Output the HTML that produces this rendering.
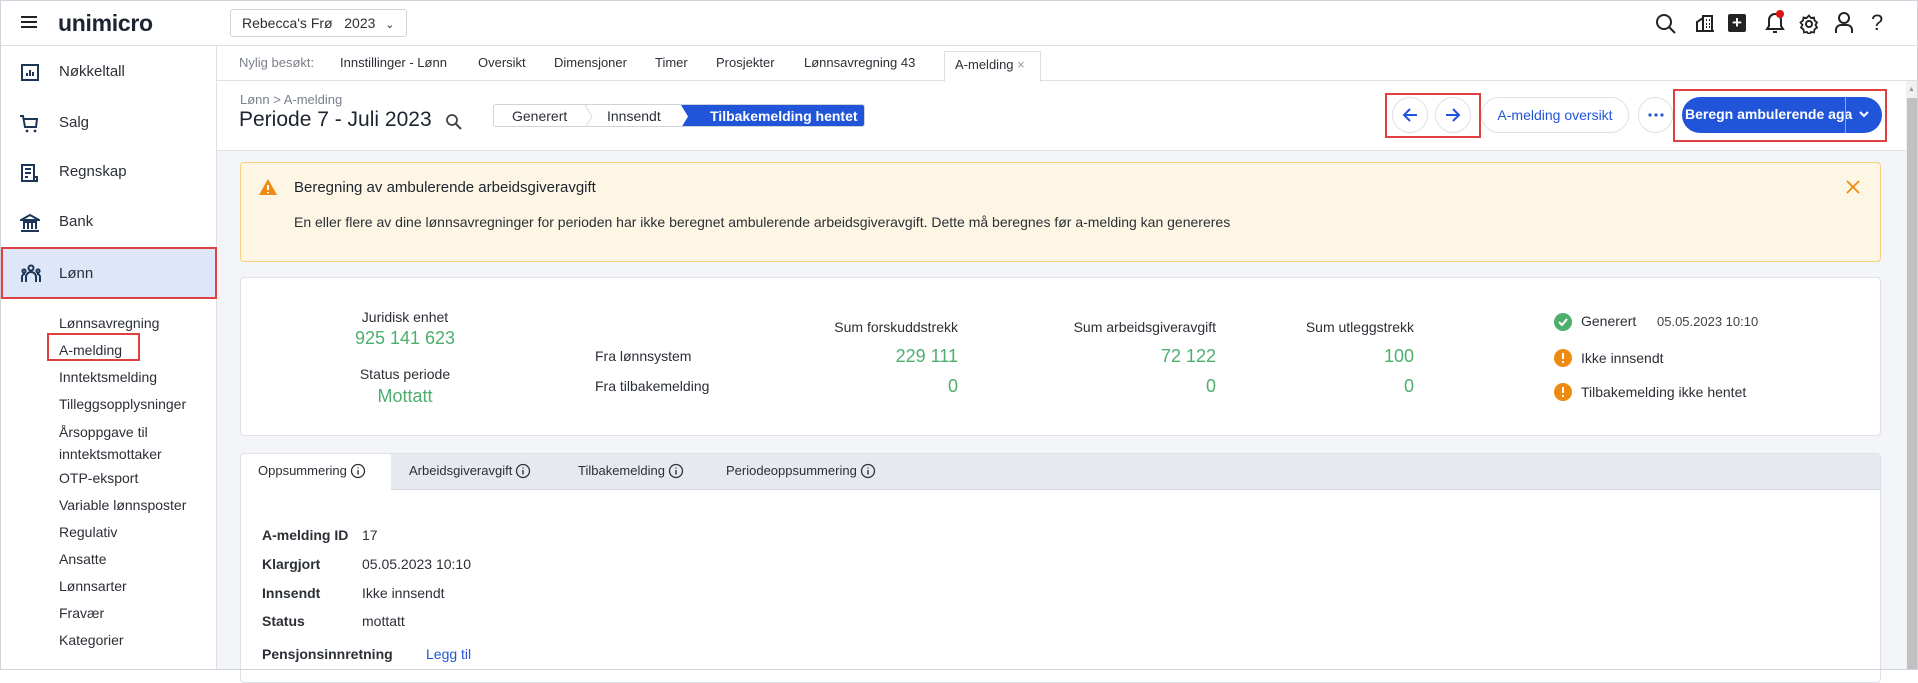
<!DOCTYPE html>
<html><head><meta charset="utf-8">
<style>
*{box-sizing:border-box;margin:0;padding:0}
body{width:1918px;height:670px;overflow:hidden;position:relative;background:#fff;font-family:"Liberation Sans",sans-serif;color:#2b2f36;font-size:14px}
.a{position:absolute;white-space:nowrap}
.red{position:absolute;border:2.5px solid #e0403f}
.g{color:#4caf6e}
.ico{stroke:#1d3557;fill:none;stroke-width:2}
.inf{display:inline-block;vertical-align:middle;margin-left:3px;margin-top:-2px}
</style></head><body>
<div class="a" style="left:0;top:0;width:1918px;height:670px;border:1px solid #cfd4da;z-index:50;pointer-events:none"></div>
<!-- header -->
<div class="a" style="left:0;top:0;width:1918px;height:46px;border-bottom:1px solid #dde1e6;background:#fff"></div>
<svg class="a" style="left:21px;top:15px" width="16" height="14"><path d="M0 2h16M0 7h16M0 12h16" stroke="#222" stroke-width="2"/></svg>
<div class="a" style="left:58px;top:10px;font-size:23px;font-weight:bold;color:#1b2430;letter-spacing:-0.3px">unimicro</div>
<div class="a" style="left:230px;top:9px;width:177px;height:28px;border:1px solid #cfd4da;border-radius:3px;padding:5px 11px;font-size:14px">Rebecca's Frø &nbsp; 2023 <span style="font-size:11px;margin-left:6px">&#8964;</span></div>
<svg class="a" style="left:1655px;top:13px" width="22" height="22"><circle cx="9" cy="9" r="7" stroke="#222" stroke-width="2" fill="none"/><path d="M14 14l6 6" stroke="#222" stroke-width="2"/></svg>
<svg class="a" style="left:1695px;top:13px" width="20" height="20"><path d="M2 18V9l6-4v13M8 18V3h9v15M1 18h18M11 7h1M14 7h1M11 11h1M14 11h1M11 14h1M14 14h1" stroke="#222" stroke-width="2" fill="none"/></svg>
<div class="a" style="left:1728px;top:14px;width:18px;height:18px;background:#222;border-radius:2px;color:#fff;font-weight:bold;font-size:17px;line-height:18px;text-align:center">+</div>
<svg class="a" style="left:1763px;top:10px" width="24" height="26"><path d="M4 19h16l-2-3v-6a6 6 0 0 0-12 0v6zM10 22h4" stroke="#222" stroke-width="2" fill="none"/><circle cx="17" cy="4" r="4" fill="#e01010"/></svg>
<svg class="a" style="left:1799px;top:14px" width="20" height="20"><circle cx="10" cy="10" r="3" stroke="#222" stroke-width="2" fill="none"/><path d="M10 1.5l2 2.5 3-.5 .5 3 2.5 2-1.5 2.5 1.5 2.5-2.5 2-.5 3-3-.5-2 2.5-2-2.5-3 .5-.5-3-2.5-2 1.5-2.5L1.5 8.5l2.5-2 .5-3 3 .5z" stroke="#222" stroke-width="1.8" fill="none"/></svg>
<svg class="a" style="left:1835px;top:12px" width="18" height="22"><circle cx="9" cy="6" r="5" stroke="#222" stroke-width="2" fill="none"/><path d="M1 21v-3a5 5 0 0 1 5-5h6a5 5 0 0 1 5 5v3" stroke="#222" stroke-width="2" fill="none"/></svg>
<div class="a" style="left:1871px;top:10px;font-size:22px;color:#222">?</div>

<!-- sidebar -->
<div class="a" style="left:0;top:46px;width:217px;height:624px;border-right:1px solid #dde1e6;background:#fff"></div>
<svg class="a" style="left:21px;top:64px" width="18" height="17"><rect x="1" y="1" width="16" height="15" class="ico"/><path d="M6 12V9M9 12V6M12 12V8" class="ico"/></svg>
<div class="a" style="left:59px;top:63px;font-size:15px">Nøkkeltall</div>
<svg class="a" style="left:19px;top:114px" width="22" height="20"><path d="M1 2h3l2 11h11l1-8H5" class="ico"/><circle cx="8" cy="17" r="1.4" fill="#1d3557"/><circle cx="16" cy="17" r="1.4" fill="#1d3557"/></svg>
<div class="a" style="left:59px;top:114px;font-size:15px">Salg</div>
<svg class="a" style="left:20px;top:163px" width="20" height="20"><path d="M2 2h12v16H2zM14 14h3v4h-3M5 6h6M5 10h6M5 14h3" class="ico"/></svg>
<div class="a" style="left:59px;top:163px;font-size:15px">Regnskap</div>
<svg class="a" style="left:20px;top:213px" width="20" height="20"><path d="M1 7L10 2l9 5zM3 9h14M4 10v6M8 10v6M12 10v6M16 10v6M1 18h18" class="ico"/></svg>
<div class="a" style="left:59px;top:213px;font-size:15px">Bank</div>
<div class="a" style="left:2px;top:248px;width:214px;height:49px;background:#dde7f9"></div>
<div class="red" style="left:1px;top:247px;width:216px;height:52px"></div>
<svg class="a" style="left:20px;top:264px" width="22" height="20"><circle cx="11" cy="4" r="2.5" class="ico" stroke-width="1.8"/><path d="M6 18v-5a5 5 0 0 1 10 0v5M2 18v-5a3 3 0 0 1 3-3M20 18v-5a3 3 0 0 0-3-3" class="ico" stroke-width="1.8"/><circle cx="4" cy="7" r="1.6" class="ico" stroke-width="1.5"/><circle cx="18" cy="7" r="1.6" class="ico" stroke-width="1.5"/></svg>
<div class="a" style="left:59px;top:265px;font-size:15px">Lønn</div>
<div style="position:absolute;left:59px;top:310px;font-size:14px;line-height:27px;color:#2b2f36">
<div>Lønnsavregning</div><div>A-melding</div><div>Inntektsmelding</div><div>Tilleggsopplysninger</div><div style="line-height:22px;padding-top:3px">Årsoppgave til<br>inntektsmottaker</div><div>OTP-eksport</div><div>Variable lønnsposter</div><div>Regulativ</div><div>Ansatte</div><div>Lønnsarter</div><div>Fravær</div><div>Kategorier</div></div>
<div class="red" style="left:47px;top:333px;width:93px;height:28px"></div>

<!-- recent bar -->
<div class="a" style="left:217px;top:46px;width:1701px;height:35px;border-bottom:1px solid #dde1e6"></div>
<div class="a" style="left:239px;top:55px;font-size:13px;color:#7a808a">Nylig besøkt:</div>
<div class="a" style="left:340px;top:55px;font-size:13px">Innstillinger - Lønn</div>
<div class="a" style="left:478px;top:55px;font-size:13px">Oversikt</div>
<div class="a" style="left:554px;top:55px;font-size:13px">Dimensjoner</div>
<div class="a" style="left:655px;top:55px;font-size:13px">Timer</div>
<div class="a" style="left:716px;top:55px;font-size:13px">Prosjekter</div>
<div class="a" style="left:804px;top:55px;font-size:13px">Lønnsavregning 43</div>
<div class="a" style="left:944px;top:51px;width:97px;height:31px;border:1px solid #dde1e6;border-bottom:none;background:#fff;font-size:13px;padding:5px 10px">A-melding <span style="color:#999">×</span></div>

<!-- title -->
<div class="a" style="left:240px;top:92px;font-size:13px;color:#7a808a">Lønn &gt; A-melding</div>
<div class="a" style="left:239px;top:108px;font-size:21px;color:#1b2430">Periode 7 - Juli 2023</div>
<svg class="a" style="left:445px;top:113px" width="17" height="17"><circle cx="7" cy="7" r="5" stroke="#444" stroke-width="1.8" fill="none"/><path d="M11 11l5 5" stroke="#444" stroke-width="2"/></svg>
<div class="a" style="left:493px;top:104px;width:372px;height:23px;border:1px solid #cfd4da;border-radius:3px;overflow:hidden">
<div class="a" style="left:18px;top:3px;font-size:14px">Generert</div>
<svg class="a" style="left:90px;top:0" width="10" height="23"><path d="M1 0l7 11.5L1 23" stroke="#d5d9de" fill="none"/></svg>
<div class="a" style="left:113px;top:3px;font-size:14px">Innsendt</div>
<div class="a" style="left:187px;top:-1px;width:190px;height:25px;background:#2155d9"></div>
<svg class="a" style="left:187px;top:0" width="10" height="23"><path d="M0 0l7 11.5L0 23z" fill="#fff"/></svg>
<div class="a" style="left:216px;top:3px;font-size:14px;color:#fff;font-weight:bold">Tilbakemelding hentet</div>
</div>
<!-- action buttons -->
<div class="a" style="left:1392px;top:97px;width:36px;height:36px;border:1px solid #dde1e6;border-radius:50%"></div>
<svg class="a" style="left:1401px;top:106px" width="18" height="18"><path d="M16 9H3M9 3L3 9l6 6" stroke="#2155d9" stroke-width="2" fill="none"/></svg>
<div class="a" style="left:1435px;top:97px;width:36px;height:36px;border:1px solid #dde1e6;border-radius:50%"></div>
<svg class="a" style="left:1444px;top:106px" width="18" height="18"><path d="M2 9h13M9 3l6 6-6 6" stroke="#2155d9" stroke-width="2" fill="none"/></svg>
<div class="red" style="left:1385px;top:93px;width:96px;height:45px"></div>
<div class="a" style="left:1481px;top:97px;width:148px;height:36px;border:1px solid #dde1e6;border-radius:18px;color:#2155d9;font-size:14px;text-align:center;line-height:34px">A-melding oversikt</div>
<div class="a" style="left:1638px;top:97px;width:35px;height:36px;border:1px solid #dde1e6;border-radius:18px"></div>
<svg class="a" style="left:1647px;top:113px" width="18" height="4"><circle cx="3" cy="2" r="1.6" fill="#2155d9"/><circle cx="9" cy="2" r="1.6" fill="#2155d9"/><circle cx="15" cy="2" r="1.6" fill="#2155d9"/></svg>
<div class="a" style="left:1682px;top:97px;width:200px;height:36px;border-radius:18px;background:#2155d9;overflow:hidden">
<div class="a" style="left:3px;top:9px;color:#fff;font-weight:bold;font-size:14px">Beregn ambulerende aga</div>
<div class="a" style="left:163px;top:0;width:1px;height:36px;background:#8aa6ee"></div>
<svg class="a" style="left:176px;top:13px" width="12" height="10"><path d="M2 2l4 4 4-4" stroke="#fff" stroke-width="2" fill="none"/></svg>
</div>
<div class="red" style="left:1673px;top:89px;width:214px;height:53px"></div>

<!-- content bg -->
<div class="a" style="left:217px;top:150px;width:1689px;height:520px;background:#f3f5f8;border-top:1px solid #dde1e6"></div>
<div class="a" style="left:1906px;top:81px;width:12px;height:589px;background:#f1f1f1"></div>
<div class="a" style="left:1907px;top:98px;width:10px;height:572px;background:#c1c1c1"></div>
<div class="a" style="left:1908px;top:86px;font-size:7px;color:#999">▲</div>

<!-- warning -->
<div class="a" style="left:240px;top:162px;width:1641px;height:100px;background:#fef6e4;border:1px solid #f4cf7e;border-radius:4px"></div>
<svg class="a" style="left:258px;top:178px" width="20" height="18"><path d="M10 1L19 17H1z" fill="#ee8a10"/><path d="M10 7v5M10 14v1.5" stroke="#fff" stroke-width="2"/></svg>
<div class="a" style="left:294px;top:179px;font-size:15px;color:#1b2430">Beregning av ambulerende arbeidsgiveravgift</div>
<div class="a" style="left:294px;top:214px;font-size:14px;color:#2b2f36">En eller flere av dine lønnsavregninger for perioden har ikke beregnet ambulerende arbeidsgiveravgift. Dette må beregnes før a-melding kan genereres</div>
<svg class="a" style="left:1846px;top:180px" width="14" height="14"><path d="M1 1l12 12M13 1L1 13" stroke="#ee8a10" stroke-width="1.8"/></svg>

<!-- stats card -->
<div class="a" style="left:240px;top:277px;width:1641px;height:159px;background:#fff;border:1px solid #dde1e6;border-radius:4px"></div>
<div class="a" style="left:305px;top:309px;width:200px;text-align:center;font-size:14px">Juridisk enhet</div>
<div class="a g" style="left:305px;top:328px;width:200px;text-align:center;font-size:18px">925 141 623</div>
<div class="a" style="left:305px;top:366px;width:200px;text-align:center;font-size:14px">Status periode</div>
<div class="a g" style="left:305px;top:386px;width:200px;text-align:center;font-size:18px">Mottatt</div>
<div class="a" style="left:595px;top:348px;font-size:14px">Fra lønnsystem</div>
<div class="a" style="left:595px;top:378px;font-size:14px">Fra tilbakemelding</div>
<div class="a" style="left:758px;top:319px;width:200px;text-align:right;font-size:14px">Sum forskuddstrekk</div>
<div class="a g" style="left:758px;top:346px;width:200px;text-align:right;font-size:18px">229 111</div>
<div class="a g" style="left:758px;top:376px;width:200px;text-align:right;font-size:18px">0</div>
<div class="a" style="left:1016px;top:319px;width:200px;text-align:right;font-size:14px">Sum arbeidsgiveravgift</div>
<div class="a g" style="left:1016px;top:346px;width:200px;text-align:right;font-size:18px">72 122</div>
<div class="a g" style="left:1016px;top:376px;width:200px;text-align:right;font-size:18px">0</div>
<div class="a" style="left:1214px;top:319px;width:200px;text-align:right;font-size:14px">Sum utleggstrekk</div>
<div class="a g" style="left:1214px;top:346px;width:200px;text-align:right;font-size:18px">100</div>
<div class="a g" style="left:1214px;top:376px;width:200px;text-align:right;font-size:18px">0</div>
<svg class="a" style="left:1554px;top:313px" width="18" height="18"><circle cx="9" cy="9" r="9" fill="#4caf6e"/><path d="M5 9l3 3 5-6" stroke="#fff" stroke-width="2" fill="none"/></svg>
<div class="a" style="left:1581px;top:313px;font-size:14px">Generert</div>
<div class="a" style="left:1657px;top:314px;font-size:13px;color:#444">05.05.2023 10:10</div>
<svg class="a" style="left:1554px;top:349px" width="18" height="18"><circle cx="9" cy="9" r="9" fill="#ee8a10"/><path d="M9 4v6M9 12v2" stroke="#fff" stroke-width="2"/></svg>
<div class="a" style="left:1581px;top:350px;font-size:14px">Ikke innsendt</div>
<svg class="a" style="left:1554px;top:383px" width="18" height="18"><circle cx="9" cy="9" r="9" fill="#ee8a10"/><path d="M9 4v6M9 12v2" stroke="#fff" stroke-width="2"/></svg>
<div class="a" style="left:1581px;top:384px;font-size:14px">Tilbakemelding ikke hentet</div>

<!-- tabs card -->
<div class="a" style="left:240px;top:453px;width:1641px;height:230px;background:#fff;border:1px solid #dde1e6;border-radius:4px"></div>
<div class="a" style="left:391px;top:454px;width:1489px;height:36px;background:#e6eaf0;border-bottom:1px solid #d5dae0;border-top-right-radius:4px"></div>
<div class="a" style="left:258px;top:463px;font-size:13px;line-height:16px">Oppsummering<svg class="inf" width="16" height="16"><circle cx="8" cy="8" r="6.5" stroke="#333" stroke-width="1.3" fill="none"/><path d="M8 7v4.5M8 4.5v1" stroke="#333" stroke-width="1.4"/></svg></div>
<div class="a" style="left:409px;top:463px;font-size:13px;line-height:16px">Arbeidsgiveravgift<svg class="inf" width="16" height="16"><circle cx="8" cy="8" r="6.5" stroke="#333" stroke-width="1.3" fill="none"/><path d="M8 7v4.5M8 4.5v1" stroke="#333" stroke-width="1.4"/></svg></div>
<div class="a" style="left:578px;top:463px;font-size:13px;line-height:16px">Tilbakemelding<svg class="inf" width="16" height="16"><circle cx="8" cy="8" r="6.5" stroke="#333" stroke-width="1.3" fill="none"/><path d="M8 7v4.5M8 4.5v1" stroke="#333" stroke-width="1.4"/></svg></div>
<div class="a" style="left:726px;top:463px;font-size:13px;line-height:16px">Periodeoppsummering<svg class="inf" width="16" height="16"><circle cx="8" cy="8" r="6.5" stroke="#333" stroke-width="1.3" fill="none"/><path d="M8 7v4.5M8 4.5v1" stroke="#333" stroke-width="1.4"/></svg></div>
<div class="a" style="left:262px;top:527px;font-size:14px;font-weight:bold">A-melding ID</div><div class="a" style="left:362px;top:527px;font-size:14px">17</div>
<div class="a" style="left:262px;top:556px;font-size:14px;font-weight:bold">Klargjort</div><div class="a" style="left:362px;top:556px;font-size:14px">05.05.2023 10:10</div>
<div class="a" style="left:262px;top:585px;font-size:14px;font-weight:bold">Innsendt</div><div class="a" style="left:362px;top:585px;font-size:14px">Ikke innsendt</div>
<div class="a" style="left:262px;top:613px;font-size:14px;font-weight:bold">Status</div><div class="a" style="left:362px;top:613px;font-size:14px">mottatt</div>
<div class="a" style="left:262px;top:646px;font-size:14px;font-weight:bold">Pensjonsinnretning</div><div class="a" style="left:426px;top:646px;font-size:14px;color:#2155d9">Legg til</div>
</body></html>
